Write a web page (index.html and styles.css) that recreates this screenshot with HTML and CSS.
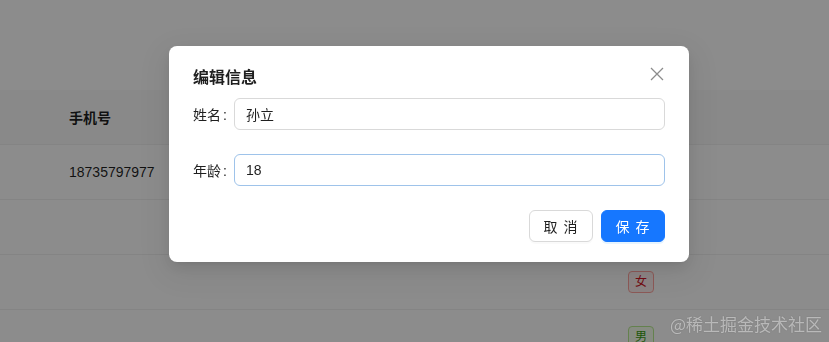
FILE: index.html
```html
<!DOCTYPE html>
<html lang="zh-CN">
<head>
    <meta charset="UTF-8">
    <meta name="viewport" content="width=device-width, initial-scale=1.0">
    <title>编辑信息</title>
    <link rel="stylesheet" href="styles.css">
</head>
<body>
    <div class="page">
        <div class="table">
            <div class="row head">
                <div class="cell"></div>
                <div class="cell">手机号</div>
                <div class="cell"></div>
            </div>
            <div class="row">
                <div class="cell"></div>
                <div class="cell">18735797977</div>
                <div class="cell"></div>
            </div>
            <div class="row">
                <div class="cell"></div>
                <div class="cell"></div>
                <div class="cell"></div>
            </div>
            <div class="row">
                <div class="cell"></div>
                <div class="cell"></div>
                <div class="cell"><span class="tag tag-red">女</span></div>
            </div>
            <div class="row">
                <div class="cell"></div>
                <div class="cell"></div>
                <div class="cell"><span class="tag tag-green">男</span></div>
            </div>
        </div>
    </div>

    <div class="mask"></div>

    <div class="modal-wrap">
        <div class="modal">
            <button class="modal-close" aria-label="Close">
                <svg width="14" height="14" viewBox="0 0 14 14">
                    <path d="M1 1 L13 13 M13 1 L1 13" stroke="currentColor" stroke-width="1.3" fill="none"/>
                </svg>
            </button>
            <div class="modal-title">编辑信息</div>
            <div class="form-item">
                <label class="form-label">姓名</label>
                <input class="form-input" type="text" value="孙立">
            </div>
            <div class="form-item">
                <label class="form-label">年龄</label>
                <input class="form-input focused" type="text" value="18">
            </div>
            <div class="modal-footer">
                <button class="btn">取 消</button>
                <button class="btn btn-primary">保 存</button>
            </div>
        </div>
    </div>

    <div class="watermark">@稀土掘金技术社区</div>
</body>
</html>
```

FILE: styles.css
```css
body {
    margin: 0;
    font-family: "Liberation Sans", "Noto Sans CJK SC", sans-serif;
    font-size: 14px;
    color: rgba(0, 0, 0, 0.88);
    background: #fff;
    overflow: hidden;
}

.page {
    padding-top: 90px;
}

.row {
    display: grid;
    grid-template-columns: 53px 559px 1fr;
    height: 55px;
    border-bottom: 1px solid #f0f0f0;
    box-sizing: border-box;
}

.row.head {
    background: #fafafa;
    font-weight: bold;
}

.cell {
    display: flex;
    align-items: center;
    padding: 0 16px;
}

.row .cell:first-child {
    padding: 0;
}

.tag {
    display: inline-block;
    padding: 0 6px;
    line-height: 20px;
    font-size: 12px;
    border-radius: 4px;
    border: 1px solid;
}

.tag-red {
    color: #cf1322;
    background: #fff1f0;
    border-color: #ffa39e;
}

.tag-green {
    color: #389e0d;
    background: #f6ffed;
    border-color: #b7eb8f;
}

.mask {
    position: fixed;
    inset: 0;
    background: rgba(0, 0, 0, 0.45);
}

.modal-wrap {
    position: fixed;
    inset: 0;
    padding: 46px 0 0 169px;
}

.modal {
    position: relative;
    width: 520px;
    box-sizing: border-box;
    background: #fff;
    border-radius: 8px;
    padding: 20px 24px;
    box-shadow: 0 6px 16px rgba(0, 0, 0, 0.08), 0 3px 6px -4px rgba(0, 0, 0, 0.12), 0 9px 28px 8px rgba(0, 0, 0, 0.05);
}

.modal-close {
    position: absolute;
    top: 17px;
    right: 21px;
    width: 22px;
    height: 22px;
    padding: 0;
    border: 0;
    background: none;
    color: rgba(0, 0, 0, 0.45);
    display: flex;
    align-items: center;
    justify-content: center;
}

.modal-title {
    font-size: 16px;
    font-weight: 600;
    line-height: 24px;
    margin-bottom: 8px;
}

.form-item {
    display: flex;
    align-items: center;
    margin-bottom: 24px;
}

.form-label {
    flex-shrink: 0;
    white-space: nowrap;
}

.form-label::after {
    content: ":";
    margin: 0 7px 0 2px;
}

.form-input {
    flex: 1;
    min-width: 0;
    height: 32px;
    box-sizing: border-box;
    padding: 4px 11px;
    border: 1px solid #d9d9d9;
    border-radius: 6px;
    font-family: "Liberation Sans", "Noto Sans CJK SC", sans-serif;
    font-size: 14px;
    color: rgba(0, 0, 0, 0.88);
    outline: none;
}

.form-input.focused {
    border-color: #9ec3ea;
}

.modal-footer {
    display: flex;
    justify-content: flex-end;
    gap: 8px;
}

.btn {
    width: 64px;
    height: 32px;
    padding: 0;
    border: 1px solid #d9d9d9;
    border-radius: 6px;
    background: #fff;
    color: rgba(0, 0, 0, 0.88);
    font-family: "Liberation Sans", "Noto Sans CJK SC", sans-serif;
    font-size: 14px;
    letter-spacing: 1px;
    box-shadow: 0 2px 0 rgba(0, 0, 0, 0.02);
}

.btn-primary {
    background: #1677ff;
    border-color: #1677ff;
    color: #fff;
    box-shadow: 0 2px 0 rgba(5, 145, 255, 0.1);
}

.watermark {
    position: fixed;
    right: 7px;
    bottom: 6px;
    font-family: "Noto Sans CJK SC", sans-serif;
    font-size: 17px;
    color: rgba(255, 255, 255, 0.55);
    text-shadow: 0 0 1px rgba(0, 0, 0, 0.35);
}
```
